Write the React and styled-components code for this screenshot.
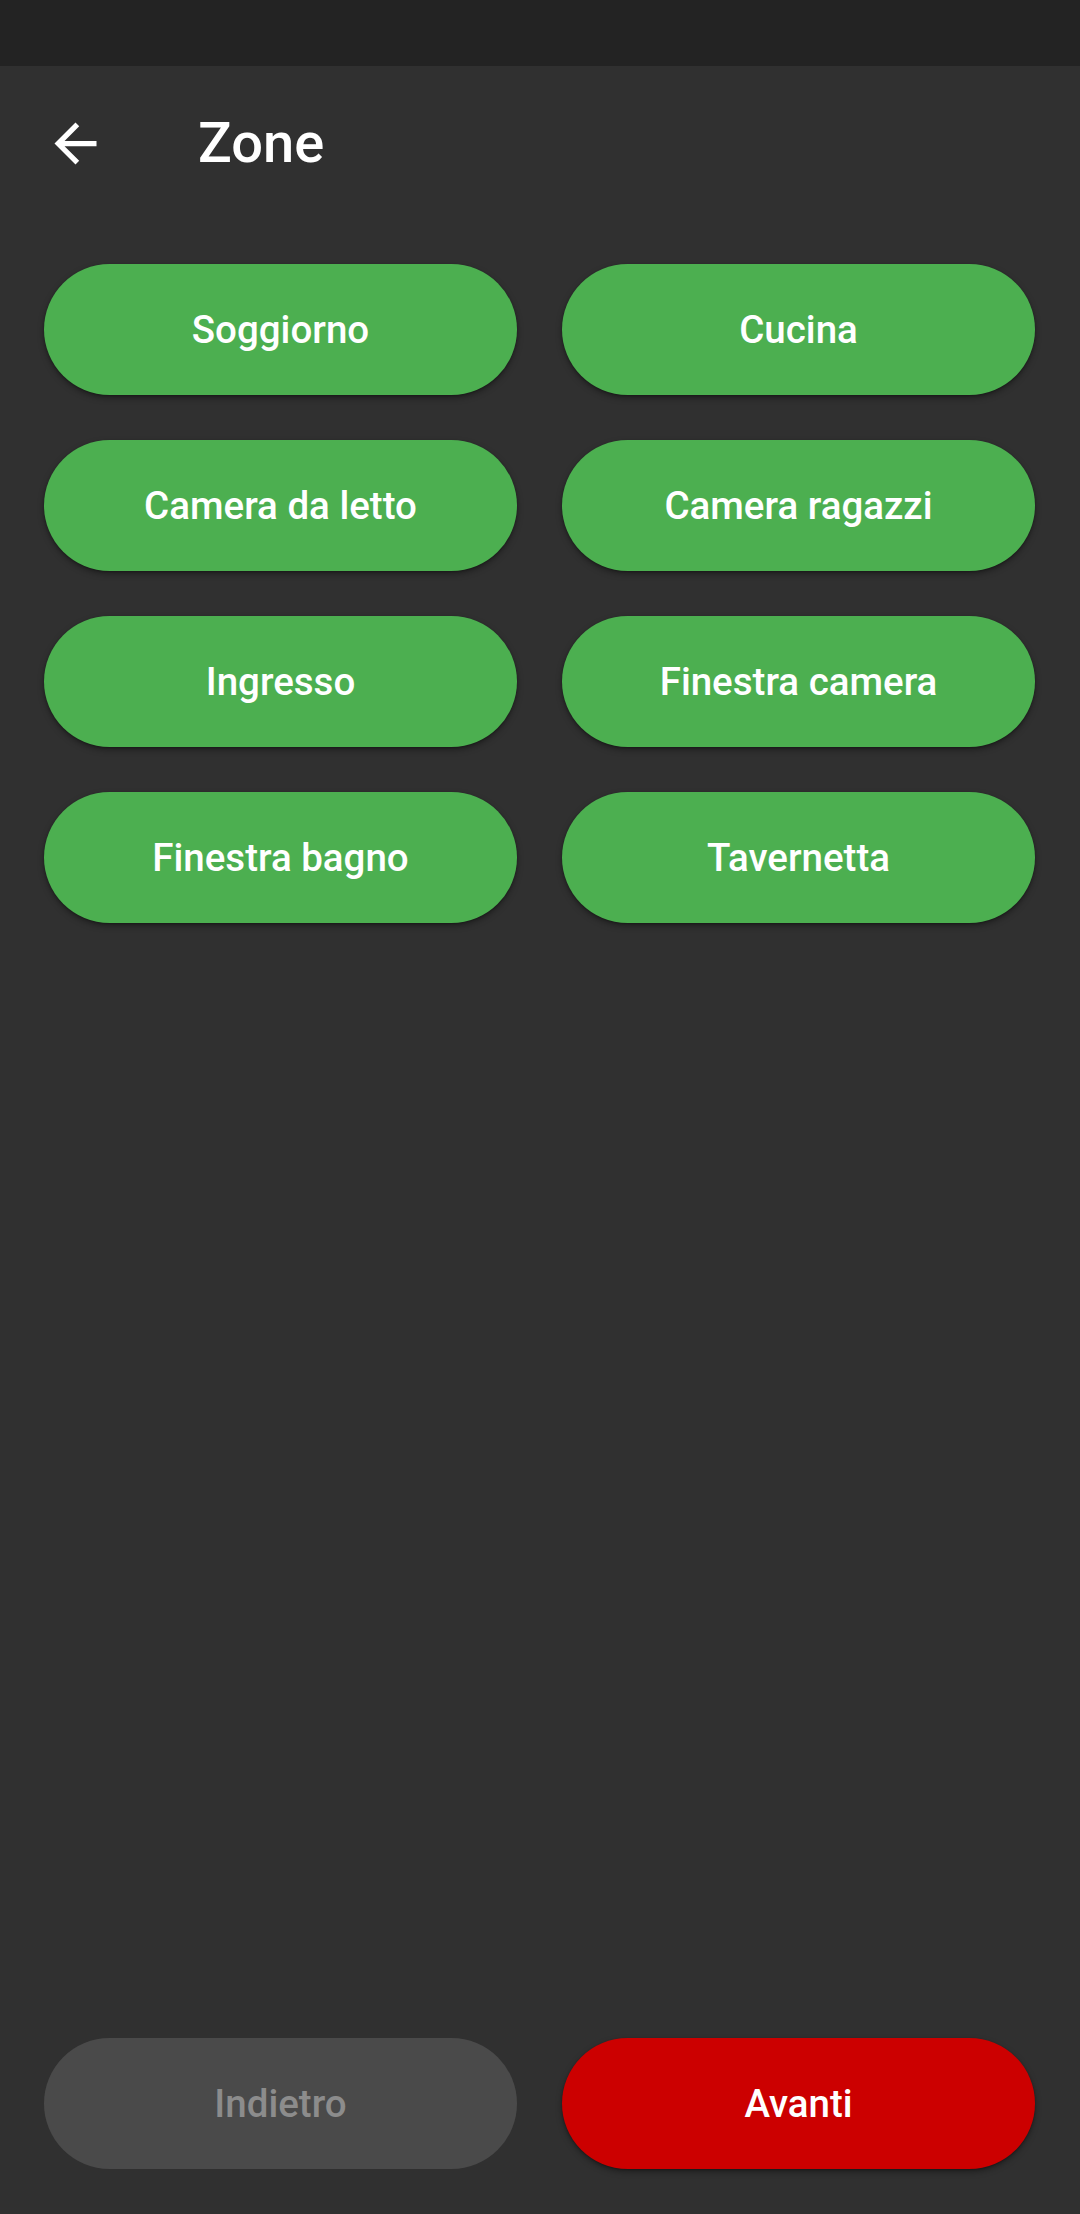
import * as React from "react";
import styled, { createGlobalStyle } from "styled-components";

const GlobalStyle = createGlobalStyle`
  html, body {
    margin: 0;
    padding: 0;
    background: #303030;
  }
  body {
    font-family: Roboto, "Noto Sans", sans-serif;
  }
`;

const Screen = styled.div`
  width: 1080px;
  height: 2214px;
  display: flex;
  flex-direction: column;
  background: #303030;
  overflow: hidden;
`;

const StatusBar = styled.div`
  height: 66px;
  flex-shrink: 0;
  background: #232323;
`;

const Toolbar = styled.div`
  height: 154px;
  flex-shrink: 0;
  display: flex;
  align-items: center;
  padding-left: 44px;
`;

const BackButton = styled.button`
  width: 63px;
  height: 63px;
  padding: 0;
  border: none;
  background: transparent;
  display: flex;
  align-items: center;
  justify-content: center;
  margin-right: 91px;
`;

const Title = styled.h1`
  margin: 0;
  font-family: Roboto, sans-serif;
  font-weight: 500;
  font-size: 56px;
  color: #ffffff;
  line-height: 1;
`;

const ZoneGrid = styled.div`
  display: grid;
  grid-template-columns: 1fr 1fr;
  column-gap: 45px;
  row-gap: 45px;
  padding: 44px 45px 0 44px;
`;

const Pill = styled.button`
  height: 131px;
  border: none;
  border-radius: 66px;
  background: ${(p) => p.$bg};
  color: ${(p) => p.$fg};
  font-family: Roboto, sans-serif;
  font-weight: 500;
  font-size: 38.5px;
  display: flex;
  align-items: center;
  justify-content: center;
  box-shadow: ${(p) =>
    p.$flat ? "none" : "0 3px 6px rgba(0, 0, 0, 0.35), 0 1px 2px rgba(0, 0, 0, 0.25)"};
`;

const Spacer = styled.div`
  flex: 1;
`;

const Footer = styled.div`
  display: grid;
  grid-template-columns: 1fr 1fr;
  column-gap: 45px;
  padding: 0 45px 45px 44px;
`;

const zones = [
  "Soggiorno",
  "Cucina",
  "Camera da letto",
  "Camera ragazzi",
  "Ingresso",
  "Finestra camera",
  "Finestra bagno",
  "Tavernetta",
];

const App = () => {
  return (
    <Screen>
      <GlobalStyle />
      <StatusBar />
      <Toolbar>
        <BackButton aria-label="Indietro">
          <svg width="63" height="63" viewBox="0 0 24 24">
            <path
              fill="#ffffff"
              d="M20 11H7.83l5.59-5.59L12 4l-8 8 8 8 1.41-1.41L7.83 13H20v-2z"
            />
          </svg>
        </BackButton>
        <Title>Zone</Title>
      </Toolbar>
      <ZoneGrid>
        {zones.map((z) => (
          <Pill key={z} $bg="#4caf50" $fg="#ffffff">
            {z}
          </Pill>
        ))}
      </ZoneGrid>
      <Spacer />
      <Footer>
        <Pill $bg="#4a4a4a" $fg="#8c8c8c" $flat>
          Indietro
        </Pill>
        <Pill $bg="#cc0000" $fg="#ffffff">
          Avanti
        </Pill>
      </Footer>
    </Screen>
  );
};

export default App;
